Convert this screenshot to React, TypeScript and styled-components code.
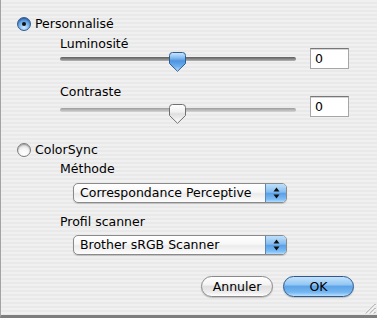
import React from "react";
import styled, { createGlobalStyle } from "styled-components";

const Global = createGlobalStyle`
  html, body { margin: 0; padding: 0; background: #ececec; }
  body { font-family: "DejaVu Sans", "Liberation Sans", sans-serif; }
`;

const Window = styled.div`
  position: relative;
  box-sizing: border-box;
  width: 377px;
  height: 318px;
  padding: 17px 0 0 16px;
  border-left: 1px solid #a3a3a3;
  border-bottom: 3px solid #7d7d7d;
  background: repeating-linear-gradient(to bottom, #f0f0f0 0 2px, #e9e9e9 2px 4px);
  font-size: 12.5px;
  color: #000;
  display: flex;
  flex-direction: column;
`;

const RadioRow = styled.div<{ $mt?: number }>`
  display: flex;
  align-items: center;
  gap: 4px;
  height: 14px;
  line-height: 14px;
  margin-top: ${(p) => p.$mt ?? 0}px;
`;

const RadioDot = styled.span<{ $on?: boolean }>`
  box-sizing: border-box;
  width: 14px;
  height: 14px;
  border-radius: 50%;
  border: 1px solid ${(p) => (p.$on ? "#34598a" : "#7c7c7c")};
  background: ${(p) =>
    p.$on
      ? "radial-gradient(circle at 50% 80%, #cdeaff 0%, #7fb9ee 40%, #3f7fcf 80%, #2f64a8 100%)"
      : "radial-gradient(circle at 50% 80%, #ffffff 0%, #f6f6f6 45%, #cfcfcf 85%, #b0b0b0 100%)"};
  box-shadow: inset 0 1px 1px rgba(0, 0, 0, 0.25);
  display: flex;
  align-items: center;
  justify-content: center;
  &::after {
    content: "";
    display: ${(p) => (p.$on ? "block" : "none")};
    width: 4px;
    height: 4px;
    border-radius: 50%;
    background: #111;
  }
`;

const Indent = styled.div`
  display: flex;
  flex-direction: column;
  padding-left: 43px;
`;

const FieldLabel = styled.div<{ $mt: number; $mb?: number }>`
  line-height: 12px;
  height: 12px;
  margin-top: ${(p) => p.$mt}px;
  margin-bottom: ${(p) => p.$mb ?? 0}px;
  white-space: nowrap;
`;

const SliderRow = styled.div`
  display: flex;
  align-items: flex-start;
  height: 21px;
`;

const Slider = styled.div`
  position: relative;
  width: 236px;
  height: 21px;
  margin-right: 14px;
`;

const Track = styled.div<{ $active?: boolean; $top: number }>`
  margin-top: ${(p) => p.$top}px;
  height: 4px;
  border-radius: 2px;
  background: ${(p) =>
    p.$active
      ? "linear-gradient(#5e5e5e, #7c7c7c 40%, #959595 70%, #b9b9b9)"
      : "linear-gradient(#9d9d9d, #b3b3b3 40%, #c2c2c2 70%, #d6d6d6)"};
`;

const ThumbWrap = styled.div<{ $top: number; $left: number }>`
  position: absolute;
  top: ${(p) => p.$top}px;
  left: ${(p) => p.$left}px;
  width: 17px;
  height: 20px;
`;

const NumberField = styled.div`
  box-sizing: border-box;
  width: 39px;
  height: 21px;
  background: #fff;
  border: 1px solid #a6a6a6;
  border-top-color: #777;
  box-shadow: inset 0 1px 0 #d6d6d6;
  padding-left: 4px;
  line-height: 19px;
`;

const Popup = styled.div<{ $mt: number }>`
  box-sizing: border-box;
  display: flex;
  width: 214px;
  height: 20px;
  margin: ${(p) => p.$mt}px 0 0 13px;
  border: 1px solid #8a8a8a;
  border-radius: 5px;
  overflow: hidden;
  background: linear-gradient(#ffffff, #f7f7f7 45%, #ebebeb 55%, #fdfdfd);
  box-shadow: 0 1px 1px rgba(0, 0, 0, 0.18);
`;

const PopupLabel = styled.span`
  flex: 1;
  padding-left: 6px;
  line-height: 18px;
  white-space: nowrap;
`;

const PopupArrows = styled.span`
  width: 20px;
  border-left: 1px solid #5d86b8;
  background: linear-gradient(#bfe0fb, #86bdf0 45%, #5b9fe6 52%, #7cbdf4 85%, #b3ddff);
  display: flex;
  align-items: center;
  justify-content: center;
`;

const ButtonRow = styled.div`
  display: flex;
  justify-content: flex-end;
  gap: 10px;
  margin-top: 21px;
  padding-right: 23px;
`;

const PillButton = styled.button<{ $primary?: boolean; $w: number }>`
  box-sizing: border-box;
  width: ${(p) => p.$w}px;
  height: 21px;
  padding: 0;
  border-radius: 11px;
  font-family: inherit;
  font-size: 12.5px;
  color: #000;
  line-height: 19px;
  border: 1px solid ${(p) => (p.$primary ? "#2c5a8f" : "#8a8a8a")};
  background: ${(p) =>
    p.$primary
      ? "linear-gradient(#c5e2fb, #93c7f3 40%, #5ea4e8 50%, #74b6f0 80%, #b8e0ff)"
      : "linear-gradient(#ffffff, #f4f4f4 40%, #e0e0e0 50%, #ececec 80%, #ffffff)"};
  box-shadow: 0 1px 1px rgba(0, 0, 0, 0.2);
`;

const Grip = styled.svg`
  position: absolute;
  right: 1px;
  bottom: 1px;
`;

function Thumb({ active }: { active?: boolean }) {
  const id = active ? "thumbA" : "thumbI";
  return (
    <svg width="17" height="20" viewBox="0 0 17 20">
      <defs>
        <linearGradient id={id} x1="0" y1="0" x2="0" y2="1">
          {active ? (
            <>
              <stop offset="0" stopColor="#d2e9fd" />
              <stop offset="0.3" stopColor="#7fb8ef" />
              <stop offset="0.45" stopColor="#4d93e0" />
              <stop offset="0.75" stopColor="#6fb0ef" />
              <stop offset="1" stopColor="#bfe2ff" />
            </>
          ) : (
            <>
              <stop offset="0" stopColor="#ffffff" />
              <stop offset="0.4" stopColor="#f0f0f0" />
              <stop offset="0.5" stopColor="#dedede" />
              <stop offset="1" stopColor="#ffffff" />
            </>
          )}
        </linearGradient>
      </defs>
      <path
        d="M3.5 0.5 H13.5 Q16.5 0.5 16.5 3.5 V11.5 L8.5 19.3 L0.5 11.5 V3.5 Q0.5 0.5 3.5 0.5 Z"
        fill={`url(#${id})`}
        stroke={active ? "#2f5d93" : "#707070"}
        strokeWidth="1"
      />
    </svg>
  );
}

function Arrows() {
  return (
    <svg width="7" height="12" viewBox="0 0 7 12">
      <path d="M3.5 0.5 L6.5 4.5 H0.5 Z" fill="#111" />
      <path d="M3.5 11.5 L6.5 7.5 H0.5 Z" fill="#111" />
    </svg>
  );
}

export default function App() {
  return (
    <>
      <Global />
      <Window>
        <RadioRow>
          <RadioDot $on />
          <span>Personnalisé</span>
        </RadioRow>
        <Indent>
          <FieldLabel $mt={7} $mb={-2}>Luminosité</FieldLabel>
          <SliderRow>
            <Slider>
              <Track $active $top={9} />
              <ThumbWrap $top={4} $left={109}>
                <Thumb active />
              </ThumbWrap>
            </Slider>
            <NumberField>0</NumberField>
          </SliderRow>
          <FieldLabel $mt={17} $mb={-2}>Contraste</FieldLabel>
          <SliderRow>
            <Slider>
              <Track $top={12} />
              <ThumbWrap $top={8} $left={109}>
                <Thumb />
              </ThumbWrap>
            </Slider>
            <NumberField>0</NumberField>
          </SliderRow>
        </Indent>
        <RadioRow $mt={26}>
          <RadioDot />
          <span>ColorSync</span>
        </RadioRow>
        <Indent>
          <FieldLabel $mt={6}>Méthode</FieldLabel>
          <Popup $mt={8}>
            <PopupLabel>Correspondance Perceptive</PopupLabel>
            <PopupArrows>
              <Arrows />
            </PopupArrows>
          </Popup>
          <FieldLabel $mt={13}>Profil scanner</FieldLabel>
          <Popup $mt={7}>
            <PopupLabel>Brother sRGB Scanner</PopupLabel>
            <PopupArrows>
              <Arrows />
            </PopupArrows>
          </Popup>
        </Indent>
        <ButtonRow>
          <PillButton $w={72}>Annuler</PillButton>
          <PillButton $w={71} $primary>
            OK
          </PillButton>
        </ButtonRow>
        <Grip width="11" height="11" viewBox="0 0 11 11">
          <path d="M10.5 1 L1 10.5 M10.5 5 L5 10.5 M10.5 9 L9 10.5" stroke="#8a8a8a" strokeWidth="1" />
          <path d="M10.5 2 L2 10.5 M10.5 6 L6 10.5" stroke="#fff" strokeWidth="1" />
        </Grip>
      </Window>
    </>
  );
}
